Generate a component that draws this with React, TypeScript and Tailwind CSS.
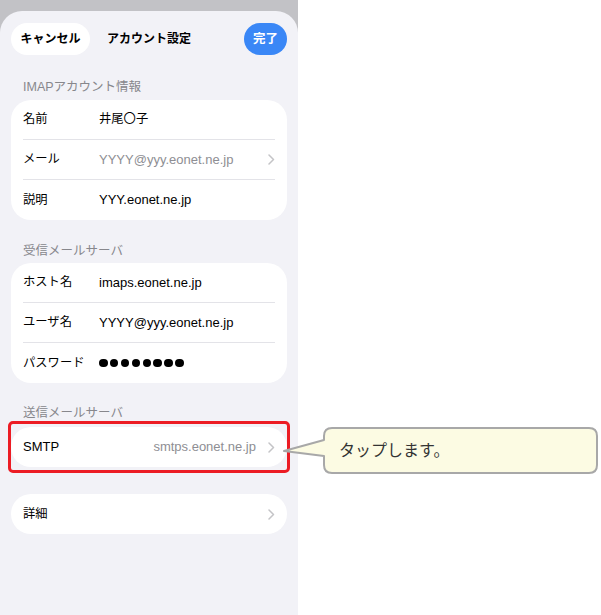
import React from 'react';

const FONT = { fontFamily: '"Liberation Sans", "Noto Sans CJK JP", sans-serif' };

// Small disclosure chevron used on tappable rows
const Chevron = () => (
  <svg width="7" height="11" viewBox="0 0 7 11" className="shrink-0">
    <polyline points="1,1 5.5,5.5 1,10" fill="none" stroke="#c4c4c7" strokeWidth="1.5" strokeLinecap="round" strokeLinejoin="round" />
  </svg>
);

interface RowProps {
  label: string;
  children?: React.ReactNode;
  last?: boolean;
}

// Labels are Japanese, so they run a touch smaller than the latin values
const Row = ({ label, children, last }: RowProps) => (
  <div className={`mx-[12px] h-[40px] flex items-center ${last ? '' : 'border-b border-[#e3e3e8]'}`}>
    <div className="w-[76px] shrink-0 text-[12.3px] text-black">{label}</div>
    <div className="flex-1 flex items-center text-[13px] text-black">{children}</div>
  </div>
);

const SectionTitle = ({ children, className }: { children: string; className: string }) => (
  <div className={`px-[23px] leading-[16px] text-[12.5px] text-[#87878c] ${className}`}>{children}</div>
);

const Dots = () => (
  <div className="flex gap-[2.4px]">
    {Array.from({ length: 8 }).map((_, i) => (
      <div key={i} className="w-[8.5px] h-[8.5px] rounded-full bg-black" />
    ))}
  </div>
);

export default function App() {
  return (
    <div className="relative flex w-[601px] h-[615px] bg-white overflow-hidden" style={FONT}>
      {/* phone screen */}
      <div className="w-[298px] flex flex-col bg-[#c2c2c6]">
        <div className="h-[11px] shrink-0" />
        <div className="flex-1 bg-[#f2f2f7] rounded-t-[22px] flex flex-col">
          <div className="pt-[12px] px-[11px] grid grid-cols-[1fr_auto_1fr] items-center">
            <div>
              <div className="inline-flex h-[32px] w-[79px] justify-center items-center rounded-full bg-white text-[12px] font-semibold text-black">
                キャンセル
              </div>
            </div>
            <div className="text-[12px] font-semibold text-black">アカウント設定</div>
            <div className="flex justify-end">
              <div className="w-[43px] h-[32px] rounded-full bg-[#3a87f6] flex items-center justify-center text-[12.5px] font-semibold text-white">
                完了
              </div>
            </div>
          </div>

          <SectionTitle className="mt-[24px]">IMAPアカウント情報</SectionTitle>
          <div className="mx-[11px] mt-[5px] bg-white rounded-[20px]">
            <Row label="名前"><span className="text-[12.3px]">井尾〇子</span></Row>
            <Row label="メール">
              <span className="flex-1 text-[#8e8e93]">YYYY@yyy.eonet.ne.jp</span>
              <Chevron />
            </Row>
            <Row label="説明" last>YYY.eonet.ne.jp</Row>
          </div>

          <SectionTitle className="mt-[23px]">受信メールサーバ</SectionTitle>
          <div className="mx-[11px] mt-[4px] bg-white rounded-[20px]">
            <Row label="ホスト名">imaps.eonet.ne.jp</Row>
            <Row label="ユーザ名">YYYY@yyy.eonet.ne.jp</Row>
            <Row label="パスワード" last>
              <Dots />
            </Row>
          </div>

          <SectionTitle className="mt-[22px]">送信メールサーバ</SectionTitle>
          <div className="mx-[8px] border-[3px] border-[#ec1c24] rounded-[5px] py-[3px]">
            <div className="bg-white rounded-[20px] h-[40px] px-[12px] flex items-center">
              <span className="text-[13px] text-black">SMTP</span>
              <span className="flex-1 text-right text-[13px] text-[#8e8e93] mr-[12px]">smtps.eonet.ne.jp</span>
              <Chevron />
            </div>
          </div>

          <div className="mx-[11px] mt-[21px] bg-white rounded-[20px] h-[40px] px-[12px] flex items-center justify-between">
            <span className="text-[12.3px] text-black">詳細</span>
            <Chevron />
          </div>
        </div>
      </div>

      {/* callout pointing at the SMTP row */}
      <div className="absolute left-[283px] top-[427px] w-[316px] h-[47px]">
        <svg width="316" height="47" viewBox="0 0 316 47" className="absolute inset-0">
          <path
            d="M 49 1 H 306 Q 314 1 314 9 V 38 Q 314 46 306 46 H 49 Q 41 46 41 38 V 29 L 1 24 L 41 13 V 9 Q 41 1 49 1 Z"
            fill="#fcfbe3"
            stroke="#a8a8a8"
            strokeWidth="2"
            strokeLinejoin="round"
          />
        </svg>
        <div className="absolute left-[56px] top-0 h-[47px] flex items-center text-[16px] text-[#333333]">
          タップします。
        </div>
      </div>
    </div>
  );
}
